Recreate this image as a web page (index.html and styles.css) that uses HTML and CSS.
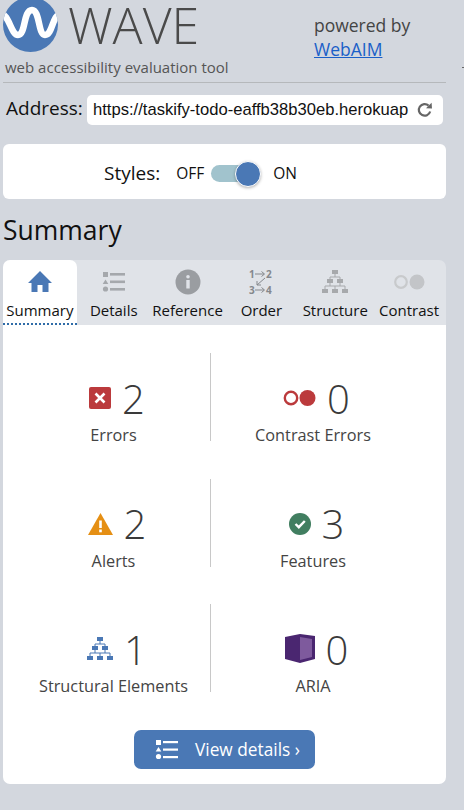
FILE: index.html
```html
<!DOCTYPE html>
<html>
<head>
    <title>WAVE Summary</title>
    <link rel="stylesheet" href="styles.css">
</head>
<body>
    <div class="edge-mark"></div>
    <div class="sidebar">
        <div class="header">
            <div class="brand">
                <div class="brand-top">
                    <svg class="logo" width="55" height="55" viewBox="0 0 55 55">
                        <defs><clipPath id="logoClip"><circle cx="27.5" cy="27.5" r="27.5"/></clipPath></defs>
                        <circle cx="27.5" cy="27.5" r="27.5" fill="#4a78b5"/>
                        <path clip-path="url(#logoClip)" d="M-2 17 C6 17 8 38 15 38 C23 38 20 13 29 13 C37 13 35 38 42 38 C50 38 49 17 58 17" fill="none" stroke="#fff" stroke-width="6.5"/>
                    </svg>
                    <span class="wave-name">WAVE</span>
                </div>
                <div class="tagline">web accessibility evaluation tool</div>
            </div>
            <div class="powered">
                <div>powered by</div>
                <a href="#">WebAIM</a>
            </div>
        </div>

        <div class="address-row">
            <label class="address-label">Address:</label>
            <div class="address-box">
                <span class="address-url">https://taskify-todo-eaffb38b30eb.herokuap</span>
                <svg class="reload" width="16" height="16" viewBox="0 0 16 16">
                    <path d="M13.2 9.5 A5.8 5.8 0 1 1 11.6 3.6" fill="none" stroke="#666" stroke-width="2.200"/>
                    <path d="M9 6.2 L15 6.6 L14.6 0.8 Z" fill="#666"/>
                </svg>
            </div>
        </div>

        <div class="styles-card">
            <span class="styles-label">Styles:</span>
            <span class="toggle-text">OFF</span>
            <div class="toggle"><div class="knob"></div></div>
            <span class="toggle-text">ON</span>
        </div>

        <h2 class="page-title">Summary</h2>

        <div class="tabs">
            <div class="tab active">
                <svg width="26" height="24" viewBox="0 0 26 24"><path d="M13 1 L25 13 H21.5 V22 H15.5 V15 H10.5 V22 H4.5 V13 H1 Z" fill="#4a78b5"/></svg>
                <span>Summary</span>
            </div>
            <div class="tab">
                <svg width="26" height="24" viewBox="0 0 26 24" fill="#a5a8ac">
                    <rect x="2" y="2" width="5" height="5"/><path d="M4.500 9.500 L7.300 14 H1.700 Z"/><circle cx="4.500" cy="19" r="2.600"/>
                    <rect x="9" y="3" width="15" height="2.600"/><rect x="9" y="10.500" width="15" height="2.600"/><rect x="9" y="18" width="15" height="2.600"/>
                </svg>
                <span>Details</span>
            </div>
            <div class="tab">
                <svg width="26" height="26" viewBox="0 0 26 26">
                    <circle cx="13" cy="13" r="12.500" fill="#9a9da1"/>
                    <circle cx="13" cy="7.800" r="1.800" fill="#e0e3e8"/><rect x="11.300" y="11" width="3.400" height="8.500" fill="#e0e3e8"/>
                </svg>
                <span>Reference</span>
            </div>
            <div class="tab">
                <svg class="order-icon" width="26" height="26" viewBox="0 0 26 26" fill="#85888c">
                    <text x="1" y="9" class="order-num">1</text><text x="18" y="9" class="order-num">2</text>
                    <text x="1" y="25" class="order-num">3</text><text x="18" y="25" class="order-num">4</text>
                    <path d="M7 5 H16 M13.500 2.500 L16.500 5 L13.500 7.500 M7 21 H16 M13.500 18.500 L16.500 21 L13.500 23.500 M17 9 L9 16 M9 12 V16 H13" fill="none" stroke="#85888c" stroke-width="1"/>
                </svg>
                <span>Order</span>
            </div>
            <div class="tab">
                <svg width="26" height="26" viewBox="0 0 26 26">
                    <use href="#treeIcon" fill="#a7a9ac" stroke="#a7a9ac"/>
                </svg>
                <span>Structure</span>
            </div>
            <div class="tab">
                <svg width="32" height="26" viewBox="0 0 32 26">
                    <circle cx="8" cy="13" r="5.800" fill="none" stroke="#c8cacc" stroke-width="2.200"/>
                    <circle cx="24" cy="13" r="7.500" fill="#c3c5c8"/>
                </svg>
                <span>Contrast</span>
            </div>
        </div>

        <div class="panel">
            <div class="stats">
                <div class="stat divider">
                    <div class="stat-top">
                        <svg width="22" height="22" viewBox="0 0 22 22">
                            <rect width="22" height="22" rx="2" fill="#bb3a3c"/>
                            <path d="M6.500 6.500 L15.500 15.500 M15.500 6.500 L6.500 15.500" stroke="#fff" stroke-width="2.600"/>
                        </svg>
                        <span class="count">2</span>
                    </div>
                    <div class="stat-label">Errors</div>
                </div>
                <div class="stat">
                    <div class="stat-top">
                        <svg width="33" height="18" viewBox="0 0 33 18">
                            <circle cx="8" cy="9" r="6.200" fill="none" stroke="#bb3a3c" stroke-width="2.400"/>
                            <circle cx="24.500" cy="9" r="8" fill="#bb3a3c"/>
                        </svg>
                        <span class="count">0</span>
                    </div>
                    <div class="stat-label">Contrast Errors</div>
                </div>
                <div class="stat divider">
                    <div class="stat-top">
                        <svg width="25" height="22" viewBox="0 0 25 22">
                            <path d="M12.500 0 L25 22 H0 Z" fill="#e58f14"/>
                            <rect x="11.200" y="7.500" width="2.600" height="7.500" fill="#fff"/><rect x="11.200" y="16.500" width="2.600" height="2.800" fill="#fff"/>
                        </svg>
                        <span class="count">2</span>
                    </div>
                    <div class="stat-label">Alerts</div>
                </div>
                <div class="stat">
                    <div class="stat-top">
                        <svg width="22" height="22" viewBox="0 0 22 22">
                            <circle cx="11" cy="11" r="11" fill="#417e60"/>
                            <path d="M6.500 11 L9.800 14.200 L15.800 8" fill="none" stroke="#fff" stroke-width="2.400"/>
                        </svg>
                        <span class="count">3</span>
                    </div>
                    <div class="stat-label">Features</div>
                </div>
                <div class="stat divider">
                    <div class="stat-top">
                        <svg width="26" height="26" viewBox="0 0 26 26">
                            <g id="treeIcon">
                                <rect x="10" y="1" width="6" height="4" stroke="none"/>
                                <rect x="5" y="10" width="6" height="4" stroke="none"/><rect x="15" y="10" width="6" height="4" stroke="none"/>
                                <rect x="0" y="20" width="6" height="4" stroke="none"/><rect x="10" y="20" width="6" height="4" stroke="none"/><rect x="20" y="20" width="6" height="4" stroke="none"/>
                                <path d="M13 5 V8 M8 10 V8 H18 V10 M8 14 V17 M18 14 V17 M3 20 V17 H23 V20 M13 17 V20" fill="none" stroke-width="1"/>
                            </g>
                            <use href="#treeIcon" fill="#4a78b5" stroke="#4a78b5"/>
                        </svg>
                        <span class="count">1</span>
                    </div>
                    <div class="stat-label">Structural Elements</div>
                </div>
                <div class="stat">
                    <div class="stat-top">
                        <svg width="30" height="30" viewBox="0 0 30 30">
                            <path d="M0 3 L15 0 L30 2 V25 L15 29 L0 25 Z" fill="#4a2670"/>
                            <path d="M15 3 L27 5 V23 L15 26 Z" fill="#7e5a9d"/>
                        </svg>
                        <span class="count">0</span>
                    </div>
                    <div class="stat-label">ARIA</div>
                </div>
            </div>

            <button class="details-btn">
                <svg width="24" height="20" viewBox="0 0 24 20" fill="#fff">
                    <rect x="1" y="0" width="5" height="5"/><path d="M3.500 7 L6.300 11.500 H0.700 Z"/><circle cx="3.500" cy="16.500" r="2.600"/>
                    <rect x="8" y="1" width="15" height="2.200"/><rect x="8" y="8.500" width="15" height="2.200"/><rect x="8" y="16" width="15" height="2.200"/>
                </svg>
                <span>View details ›</span>
            </button>
        </div>
    </div>
</body>
</html>
```

FILE: styles.css
```css
html, body {
  height: 100%;
}

body {
  margin: 0;
  background-color: #d3d7de;
  font-family: "Open Sans", sans-serif;
  color: #111;
  overflow: hidden;
}

.edge-mark {
  position: absolute;
  right: 0;
  top: 67px;
  width: 2px;
  height: 1px;
  background-color: #666;
}

.sidebar {
  width: 443px;
  margin-left: 3px;
}

/* header */
.header {
  display: flex;
  height: 82px;
  border-bottom: 1px solid #b5b8bb;
  box-sizing: content-box;
}

.brand {
  width: 311px;
}

.brand-top {
  display: flex;
  height: 56px;
}

.logo {
  margin-top: -3px;
}

.wave-name {
  margin-left: 10px;
  font-size: 50px;
  font-weight: 300;
  line-height: 50px;
  color: #4a4a4a;
}

.tagline {
  margin-left: 2px;
  font-size: 15px;
  line-height: 22px;
  color: #555;
}

.powered {
  padding-top: 13px;
  font-size: 17.5px;
  line-height: 24px;
  color: #444;
}

.powered a {
  color: #1a5fc8;
}

/* address bar */
.address-row {
  display: flex;
  align-items: center;
  margin-top: 12px;
}

.address-label {
  margin-left: 3px;
  padding-bottom: 5px;
  font-size: 19px;
  line-height: 24px;
  width: 81px;
}

.address-box {
  display: flex;
  align-items: center;
  justify-content: space-between;
  width: 356px;
  height: 30px;
  padding: 0 10px 0 6px;
  box-sizing: border-box;
  background-color: #fff;
  border-radius: 5px;
}

.address-url {
  white-space: nowrap;
  font-family: "Liberation Sans", sans-serif;
  font-size: 16.6px;
}

/* styles toggle */
.styles-card {
  display: flex;
  align-items: center;
  height: 55px;
  margin-top: 19px;
  padding: 3px 0 0 101px;
  box-sizing: border-box;
  background-color: #fff;
  border-radius: 6px;
}

.styles-label {
  font-size: 19px;
  margin-right: 16px;
}

.toggle-text {
  font-size: 15.5px;
}

.toggle {
  position: relative;
  width: 38px;
  height: 17px;
  margin: 0 24px 0 7px;
  background-color: #a1c3cd;
  border-radius: 9px;
}

.knob {
  position: absolute;
  right: -12px;
  top: -4px;
  width: 26px;
  height: 26px;
  box-sizing: border-box;
  background-color: #4a78b5;
  border: 1px solid #fff;
  border-radius: 50%;
  box-shadow: 0 1px 3px rgba(0,0,0,0.3);
}

.page-title {
  margin: 12px 0 11px;
  font-size: 26.5px;
  font-weight: 400;
  line-height: 38px;
}

/* tabs */
.tabs {
  display: grid;
  grid-template-columns: repeat(6, 1fr);
  height: 65px;
  background-color: #e0e3e8;
  border-radius: 7px 7px 0 0;
}

.tab {
  display: flex;
  flex-direction: column;
  align-items: center;
  padding-top: 9px;
  box-sizing: border-box;
  font-size: 15px;
  white-space: nowrap;
}

.tab svg {
  height: 26px;
}

.tab span {
  margin-top: 4px;
  line-height: 22px;
}

.tab.active {
  background-color: #fff;
  border-radius: 7px 7px 0 0;
  border-bottom: 2px dotted #2f6ca8;
}

.order-icon {
  overflow: visible;
}

.order-num {
  font-family: "Open Sans", sans-serif;
  font-size: 10px;
  font-weight: 700;
}

/* summary panel */
.panel {
  display: flex;
  flex-direction: column;
  align-items: center;
  height: 459px;
  padding-top: 28px;
  box-sizing: border-box;
  background-color: #fff;
  border-radius: 0 0 7px 7px;
}

.stats {
  display: grid;
  grid-template-columns: 194px 204px;
  grid-auto-rows: 88px;
  row-gap: 37.5px;
  align-self: flex-start;
  margin-left: 14px;
}

.stat {
  display: flex;
  flex-direction: column;
  align-items: center;
  padding-top: 20px;
  box-sizing: border-box;
}

.stat.divider {
  border-right: 1px solid #c8c8c8;
}

.stat-top {
  display: flex;
  align-items: center;
  gap: 11px;
  height: 50px;
  padding-left: 7px;
}

.count {
  font-size: 40px;
  font-weight: 300;
  color: #3a3a3a;
}

.stat-label {
  margin-top: 1px;
  font-size: 16.3px;
  line-height: 22px;
  color: #444;
  white-space: nowrap;
}

.details-btn {
  display: flex;
  align-items: center;
  gap: 16px;
  width: 181px;
  height: 39px;
  margin-top: 38px;
  padding-left: 21px;
  background-color: #4a78b5;
  color: #fff;
  border: none;
  border-radius: 7px;
  font-family: "Open Sans", sans-serif;
  font-size: 17.3px;
}
```
